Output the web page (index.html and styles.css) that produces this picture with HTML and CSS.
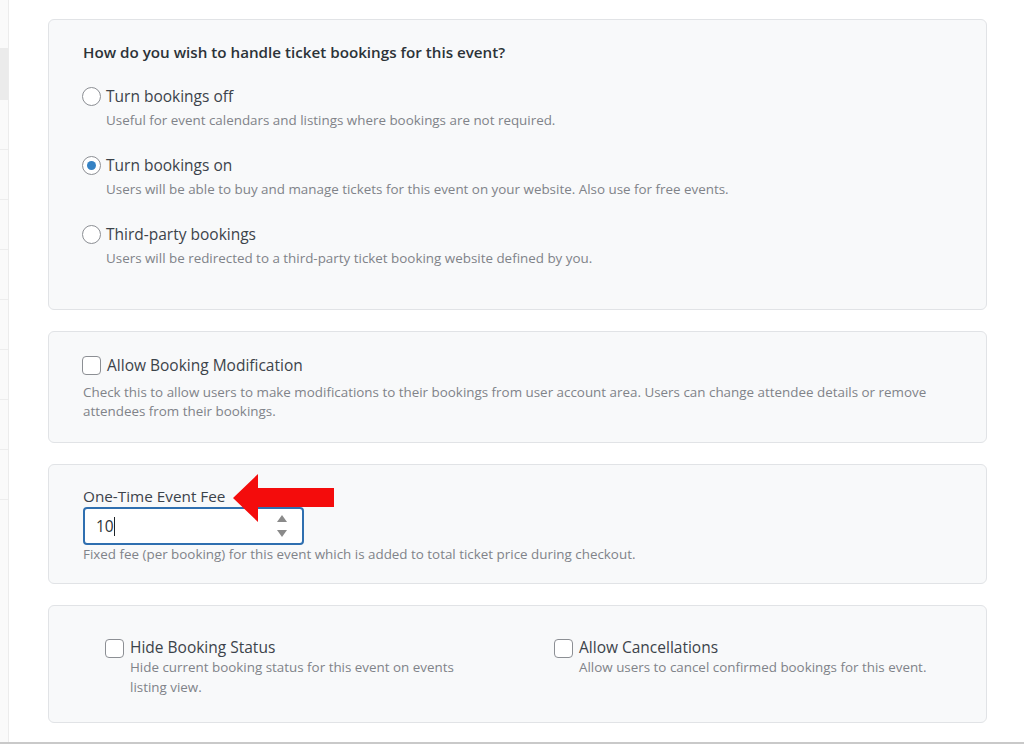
FILE: index.html
```html
<!DOCTYPE html>
<html>
<head>
<meta charset="utf-8">
<link rel="stylesheet" href="styles.css">
</head>
<body>
<div class="page">
  <aside class="sidebar">
    <div class="srow top"></div>
    <div class="srow active"></div>
    <div class="srow"></div>
    <div class="srow"></div>
    <div class="srow"></div>
    <div class="srow"></div>
    <div class="srow"></div>
    <div class="srow"></div>
    <div class="srow"></div>
    <div class="srow"></div>
  </aside>
  <main class="main">
    <section class="card card-modes">
      <h3 class="card-title">How do you wish to handle ticket bookings for this event?</h3>
      <div class="option">
        <span class="radio"></span>
        <div class="opt-text">
          <div class="label">Turn bookings off</div>
          <div class="desc">Useful for event calendars and listings where bookings are not required.</div>
        </div>
      </div>
      <div class="option">
        <span class="radio checked"></span>
        <div class="opt-text">
          <div class="label">Turn bookings on</div>
          <div class="desc">Users will be able to buy and manage tickets for this event on your website. Also use for free events.</div>
        </div>
      </div>
      <div class="option">
        <span class="radio"></span>
        <div class="opt-text">
          <div class="label">Third-party bookings</div>
          <div class="desc">Users will be redirected to a third-party ticket booking website defined by you.</div>
        </div>
      </div>
    </section>

    <section class="card card-modify">
      <div class="check-line">
        <span class="checkbox"></span>
        <span class="label">Allow Booking Modification</span>
      </div>
      <div class="desc desc-block">Check this to allow users to make modifications to their bookings from user account area. Users can change attendee details or remove attendees from their bookings.</div>
    </section>

    <section class="card card-fee">
      <div class="field-label">One-Time Event Fee</div>
      <div class="num-input">
        <span class="num-value">10<span class="caret"></span></span>
        <span class="spin">
          <svg width="12" height="28" viewBox="0 0 12 28"><path d="M6 3 L11 10 L1 10 Z" fill="#8a8a8a"/><path d="M1 18 L11 18 L6 25 Z" fill="#8a8a8a"/></svg>
        </span>
      </div>
      <div class="desc fee-desc">Fixed fee (per booking) for this event which is added to total ticket price during checkout.</div>
      <svg class="arrow" width="104" height="52" viewBox="0 0 104 52">
        <path d="M1 25 L26 1 L26 15 L102 15 L102 34 L26 34 L26 49 Z" fill="#f40c0c"/>
      </svg>
    </section>

    <section class="card card-extra">
      <div class="cols">
        <div class="col col-a">
          <span class="checkbox"></span>
          <div class="opt-text">
            <div class="label">Hide Booking Status</div>
            <div class="desc">Hide current booking status for this event on events listing view.</div>
          </div>
        </div>
        <div class="col col-b">
          <span class="checkbox"></span>
          <div class="opt-text">
            <div class="label">Allow Cancellations</div>
            <div class="desc">Allow users to cancel confirmed bookings for this event.</div>
          </div>
        </div>
      </div>
    </section>
  </main>
</div>
</body>
</html>
```

FILE: styles.css
```css
* { box-sizing: border-box; }
html, body { margin: 0; padding: 0; background: #fff; }
body {
  font-family: "Open Sans", "Noto Sans", "Liberation Sans", sans-serif;
  color: #3c434a;
}
.page {
  display: flex;
  height: 744px;
  border-bottom: 2px solid #c9c9c9;
  overflow: hidden;
}
.sidebar {
  width: 9px;
  flex: none;
  background: #fafafa;
  border-right: 1px solid #ececec;
}
.srow {
  height: 50px;
  border-bottom: 1px solid #ededed;
}
.srow.top { height: 48px; border-bottom: none; }
.srow.active { height: 52px; background: #ebebeb; border-bottom: none; }

.main {
  flex: 1;
  padding: 19px 37px 0 39px;
  display: flex;
  flex-direction: column;
  gap: 21px;
}
.card {
  background: #f8f9fa;
  border: 1px solid #e1e3e6;
  border-radius: 6px;
  padding-left: 34px;
  padding-right: 34px;
  position: relative;
}
.card-title {
  margin: 0 0 23px;
  font-size: 15.2px;
  line-height: 20px;
  font-weight: 600;
  color: #2c3338;
}
.card-modes { padding-top: 22px; padding-bottom: 41px; height: 291px; }
.option {
  display: flex;
  align-items: flex-start;
  gap: 5px;
  margin-bottom: 24px;
}
.option:last-child { margin-bottom: 0; }
.label {
  font-size: 15.5px;
  line-height: 22px;
  color: #3c434a;
}
.desc {
  font-size: 13.4px;
  line-height: 20px;
  color: #808389;
}
.opt-text .desc { margin-top: 3px; }
.radio {
  width: 19px;
  height: 19px;
  flex: none;
  margin-top: 2px;
  margin-left: -1px;
  border-radius: 50%;
  border: 1px solid #8c8f94;
  background: #fff;
  position: relative;
}
.radio.checked::after {
  content: "";
  position: absolute;
  left: 4px;
  top: 4px;
  width: 9px;
  height: 9px;
  border-radius: 50%;
  background: #3582c4;
}
.checkbox {
  width: 19px;
  height: 19px;
  flex: none;
  border: 1px solid #8c8f94;
  border-radius: 4px;
  background: #fff;
}
.card-modify { padding-top: 22px; padding-bottom: 21px; height: 112px; }
.check-line {
  display: flex;
  align-items: center;
  gap: 6px;
  margin-left: -1px;
}
.desc-block {
  margin-top: 7px;
  line-height: 19px;
}
.card-fee { padding-top: 21px; padding-bottom: 20px; height: 120px; }
.field-label {
  font-size: 15.3px;
  line-height: 20px;
  color: #3c434a;
}
.num-input {
  margin-top: 1px;
  width: 221px;
  height: 38px;
  border: 2px solid #2f6fb0;
  border-radius: 4px;
  background: #fff;
  display: flex;
  align-items: center;
  justify-content: space-between;
  padding: 0 14px 0 11px;
}
.num-value {
  font-size: 15.5px;
  color: #2c3338;
  display: flex;
  align-items: center;
}
.caret {
  display: inline-block;
  width: 1px;
  height: 19px;
  background: #1d2327;
  margin-left: 0;
}
.spin { display: flex; align-items: center; }
.fee-desc { line-height: 18px; margin-top: 0; }
.arrow {
  position: absolute;
  left: 183px;
  top: 8px;
}
.card-extra { padding-top: 31px; padding-bottom: 24px; height: 118px; }
.cols {
  display: grid;
  grid-template-columns: 449px 1fr;
}
.col {
  display: flex;
  align-items: flex-start;
  gap: 6px;
  padding-left: 22px;
}
.col .checkbox { margin-top: 2px; }
.col .label { line-height: 20px; }
.col .desc { margin-top: 0; }
.col-a .opt-text { width: 340px; }
```
